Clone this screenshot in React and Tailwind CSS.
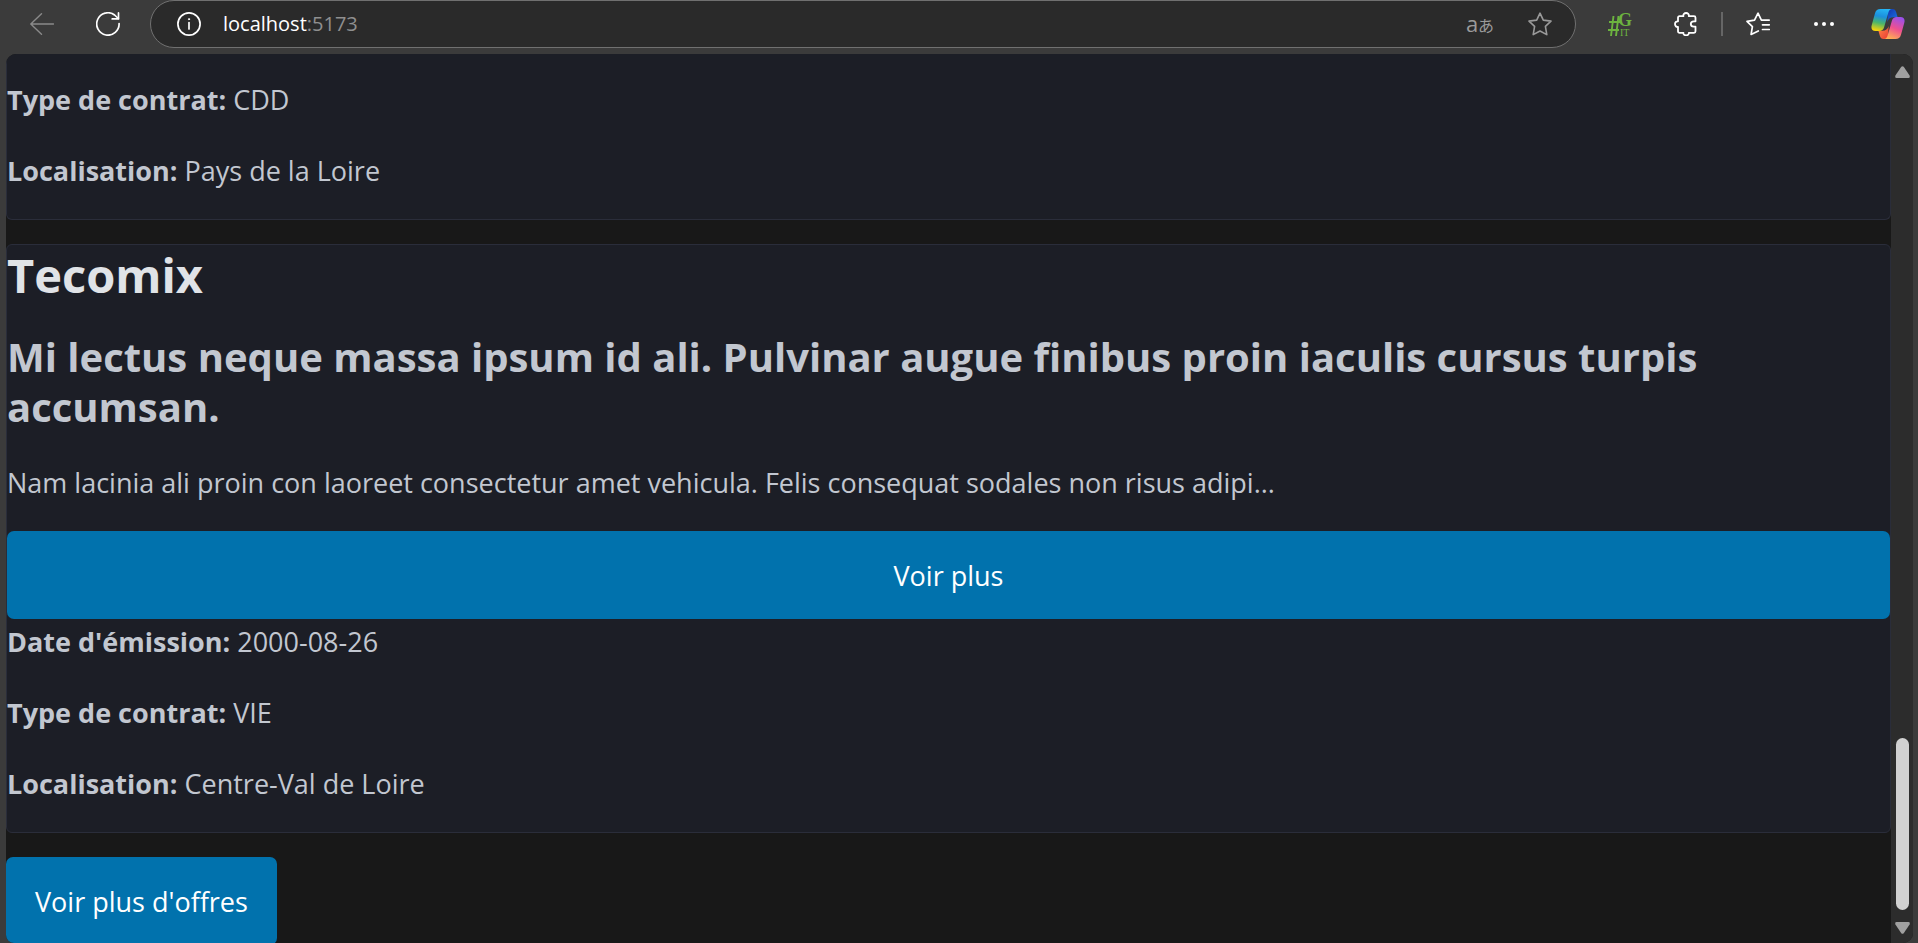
import React from "react";

function ToolButton({ label, className = "w-[66px]", children }) {
  return (
    <button type="button" aria-label={label} className={`flex h-12 shrink-0 items-center justify-center ${className}`}>
      {children}
    </button>
  );
}

const line = { fill: "none", stroke: "currentColor", strokeLinecap: "round", strokeLinejoin: "round" };

function BackIcon() {
  return (
    <svg width="24" height="24" viewBox="0 0 24 24" {...line} strokeWidth="1.4" className="text-[#8a8a8a]">
      <path d="M23.5 12H1M11.500 1.800L.8 12l10.700 10.200" />
    </svg>
  );
}

function ReloadIcon() {
  return (
    <svg width="24" height="24" viewBox="0 0 24 24" {...line} strokeWidth="1.700" className="text-white">
      <path d="M23.100 11.500A11.200 11.200 0 1 1 18.600 3L22.300 6.500" />
      <path d="M22.500 .9v6h-6.300" />
    </svg>
  );
}

function InfoIcon() {
  return (
    <svg width="24" height="24" viewBox="0 0 24 24" {...line} strokeWidth="1.700" className="shrink-0 text-white">
      <circle cx="12" cy="12" r="11.100" />
      <path d="M12 10.500v6.500" />
      <circle cx="12" cy="7.200" r=".6" fill="currentColor" strokeWidth="1" />
    </svg>
  );
}

function StarIcon() {
  return (
    <svg width="24" height="24" viewBox="0 0 24 24" {...line} strokeWidth="1.600" className="text-[#9a9a9a]">
      <path d="M12 1.200l3.300 6.900 7.700 1-5.600 5.300 1.400 8.200L12 19l-6.800 3.600 1.400-8.200L1 9.100l7.700-1z" />
    </svg>
  );
}

function GitIcon() {
  return (
    <svg width="26" height="26" viewBox="0 0 26 26" fill="none" stroke="#6cb33f" strokeWidth="1.900">
      <path d="M6.500 5L4 25M11.500 5L9 25M2 11H13M1 19H12" />
      <text x="11" y="15" fontSize="18" fontWeight="700" fontFamily="Liberation Serif, serif" fill="#6cb33f" stroke="none">G</text>
      <text x="13" y="25" fontSize="10" fontFamily="Liberation Serif, serif" fill="#6cb33f" stroke="none">IT</text>
    </svg>
  );
}

function PuzzleIcon() {
  return (
    <svg width="24" height="24" viewBox="0 0 24 24" {...line} strokeWidth="1.800" className="text-white">
      <path d="M9.400 4.200C9 2.300 10.400 1 12.100 1s3.100 1.300 2.700 3.200h5.200c.9 0 1.500.6 1.500 1.500v3.600h-1.700c-1.800 0-3 1.200-3 2.700s1.200 2.700 3 2.700h1.700v4.600c0 .9-.6 1.500-1.500 1.500h-5.200c.3 1.500-1 2.500-2.700 2.500s-3-1-2.700-2.500H5.500c-.9 0-1.500-.6-1.500-1.500v-4.500C2.200 15.200 1 13.800 1 12.100s1.200-3 3-2.700V5.700c0-.9.600-1.500 1.500-1.500z" />
    </svg>
  );
}

function FavoritesIcon() {
  return (
    <svg width="24" height="24" viewBox="0 0 24 24" {...line} strokeWidth="1.700" className="text-white">
      <path d="M23.200 8.200H15.400L12 1.200 8.500 8.200 1 9.400l5.400 5.300-1.300 7.800L12.300 19" />
      <path d="M16.500 12.800h6.800M16.500 17.500h6.800" />
    </svg>
  );
}

function DotsIcon() {
  return (
    <svg width="24" height="24" viewBox="0 0 24 24" fill="white">
      <circle cx="4" cy="12" r="2" />
      <circle cx="12" cy="12" r="2" />
      <circle cx="20" cy="12" r="2" />
    </svg>
  );
}

function CopilotIcon() {
  return (
    <svg width="34" height="30" viewBox="0 0 34 30">
      <defs>
        <linearGradient id="cpA" x1=".6" y1="0" x2=".4" y2="1">
          <stop offset="0" stopColor="#25b5f5" />
          <stop offset=".35" stopColor="#1c8fdc" />
          <stop offset=".65" stopColor="#4bb56b" />
          <stop offset="1" stopColor="#f5d20a" />
        </linearGradient>
        <linearGradient id="cpB" x1=".7" y1="0" x2=".3" y2="1">
          <stop offset="0" stopColor="#9b50ea" />
          <stop offset=".5" stopColor="#ee5090" />
          <stop offset="1" stopColor="#ffb152" />
        </linearGradient>
        <linearGradient id="cpC" x1="0" y1="0" x2="1" y2="1">
          <stop offset="0" stopColor="#1433a8" />
          <stop offset="1" stopColor="#1a78ec" />
        </linearGradient>
        <linearGradient id="cpD" x1="0" y1="0" x2="1" y2="1">
          <stop offset="0" stopColor="#ff8a45" />
          <stop offset="1" stopColor="#e83a35" />
        </linearGradient>
      </defs>
      <path d="M17 0h4.500c2 0 3 1 3.600 3l1.500 5.300h-4.200c-3 0-5 1.400-6 4.700z" fill="url(#cpC)" />
      <path d="M17 30h-4.500c-2 0-3-1-3.600-3L7.400 21.700h4.200c3 0 5-1.400 6-4.700z" fill="url(#cpD)" />
      <path d="M9.500 0H21c-2 0-2.900 1.200-3.600 3.500l-4.300 14.700c-.8 2.600-2.300 3.800-5 3.800H4.500C1.200 22-.2 19.600.7 16.300L4 4.300C4.900 1.200 6.500 0 9.500 0z" fill="url(#cpA)" />
      <path d="M24.500 30H13c2 0 2.900-1.200 3.600-3.500l4.300-14.700c.8-2.600 2.300-3.800 5-3.800h3.600c3.300 0 4.700 2.400 3.800 5.700l-3.300 12c-.9 3.100-2.500 4.300-5.500 4.300z" fill="url(#cpB)" />
    </svg>
  );
}

function BrowserBar() {
  return (
    <header className="flex h-[54px] shrink-0 items-start pl-[9px]">
      <ToolButton label="Retour"><BackIcon /></ToolButton>
      <ToolButton label="Actualiser"><ReloadIcon /></ToolButton>
      <div className="ml-[9px] flex h-12 min-w-0 flex-1 items-center rounded-full border border-[#707070] bg-[#2a2a2a] pl-[26px] pr-[5px]">
        <InfoIcon />
        <span className="ml-[22px] flex-1 text-[20px] leading-6 text-white">
          localhost<span className="text-[#8f8f8f]">:5173</span>
        </span>
        <ToolButton label="Traduire" className="w-[60px]">
          <span className="flex items-baseline text-[#9a9a9a]">
            <span className="text-[22px] leading-7">a</span>
            <span className="font-['Noto_Sans_CJK_JP',sans-serif] text-[16px] leading-7">あ</span>
          </span>
        </ToolButton>
        <ToolButton label="Ajouter aux favoris" className="w-[60px]"><StarIcon /></ToolButton>
      </div>
      <div className="ml-[11px] flex items-center">
        <ToolButton label="Extension Git"><GitIcon /></ToolButton>
        <ToolButton label="Extensions"><PuzzleIcon /></ToolButton>
        <div className="mx-[2px] h-6 w-[2px] bg-[#666]" />
        <ToolButton label="Favoris"><FavoritesIcon /></ToolButton>
        <ToolButton label="Paramètres"><DotsIcon /></ToolButton>
        <ToolButton label="Copilot" className="w-[61px]"><CopilotIcon /></ToolButton>
      </div>
    </header>
  );
}

function Field({ label, value }) {
  return (
    <p className="mb-[26px]">
      <strong>{label}:</strong> {value}
    </p>
  );
}

function Scrollbar() {
  return (
    <div aria-hidden="true" className="flex w-[22px] shrink-0 flex-col items-center bg-[#2c2c2c] pb-[9px] pt-3">
      <svg width="15" height="12" viewBox="0 0 15 12" fill="#a0a0a0">
        <path d="M6.300.8Q7.500-.4 8.700.8L14.600 9.500Q15.300 12 13.500 12h-12Q-.3 12 .4 9.500z" />
      </svg>
      <div className="flex-1" />
      <div className="h-[172px] w-[13px] rounded-full bg-[#d1d1d1]" />
      <svg width="15" height="12" viewBox="0 0 15 12" fill="#a0a0a0" className="mt-3">
        <path d="M6.300 11.200Q7.500 12.400 8.700 11.200L14.600 2.500Q15.300 0 13.500 0h-12Q-.3 0 .4 2.500z" />
      </svg>
    </div>
  );
}

export default function App() {
  return (
    <div className="flex h-screen flex-col overflow-hidden bg-[#3b3b3b] font-['Open_Sans',sans-serif]">
      <BrowserBar />
      <div className="ml-[6px] mr-[5px] flex min-h-0 flex-1 overflow-hidden rounded-[10px] rounded-bl-lg bg-[#181818]">
        <main className="min-w-0 flex-1 overflow-hidden text-[27px] leading-[45px] text-[#c2c7d0]">
          <article className="mb-6 rounded-b-[6px] border border-t-0 border-[#2a2d3a] bg-[#1c1e26] pt-[23px]">
            <Field label="Type de contrat" value="CDD" />
            <Field label="Localisation" value="Pays de la Loire" />
          </article>
          <article className="mb-6 rounded-[6px] border border-[#2a2d3a] bg-[#1c1e26]">
            <h1 className="mb-[26px] text-[47px] font-bold leading-[61px] text-[#e0e3e7]">Tecomix</h1>
            <h2 className="mb-7 text-[40px] font-bold leading-[50px]">
              Mi lectus neque massa ipsum id ali. Pulvinar augue finibus proin iaculis cursus turpis accumsan.
            </h2>
            <p className="mb-[26px]">
              Nam lacinia ali proin con laoreet consectetur amet vehicula. Felis consequat sodales non risus adipi...
            </p>
            <button type="button" className="block h-[88px] w-full rounded-[7px] bg-[#0172ad] text-white">Voir plus</button>
            <Field label="Date d'émission" value="2000-08-26" />
            <Field label="Type de contrat" value="VIE" />
            <Field label="Localisation" value="Centre-Val de Loire" />
          </article>
          <button type="button" className="block h-[88px] rounded-[7px] bg-[#0172ad] px-[29px] text-white">
            Voir plus d'offres
          </button>
        </main>
        <Scrollbar />
      </div>
    </div>
  );
}
